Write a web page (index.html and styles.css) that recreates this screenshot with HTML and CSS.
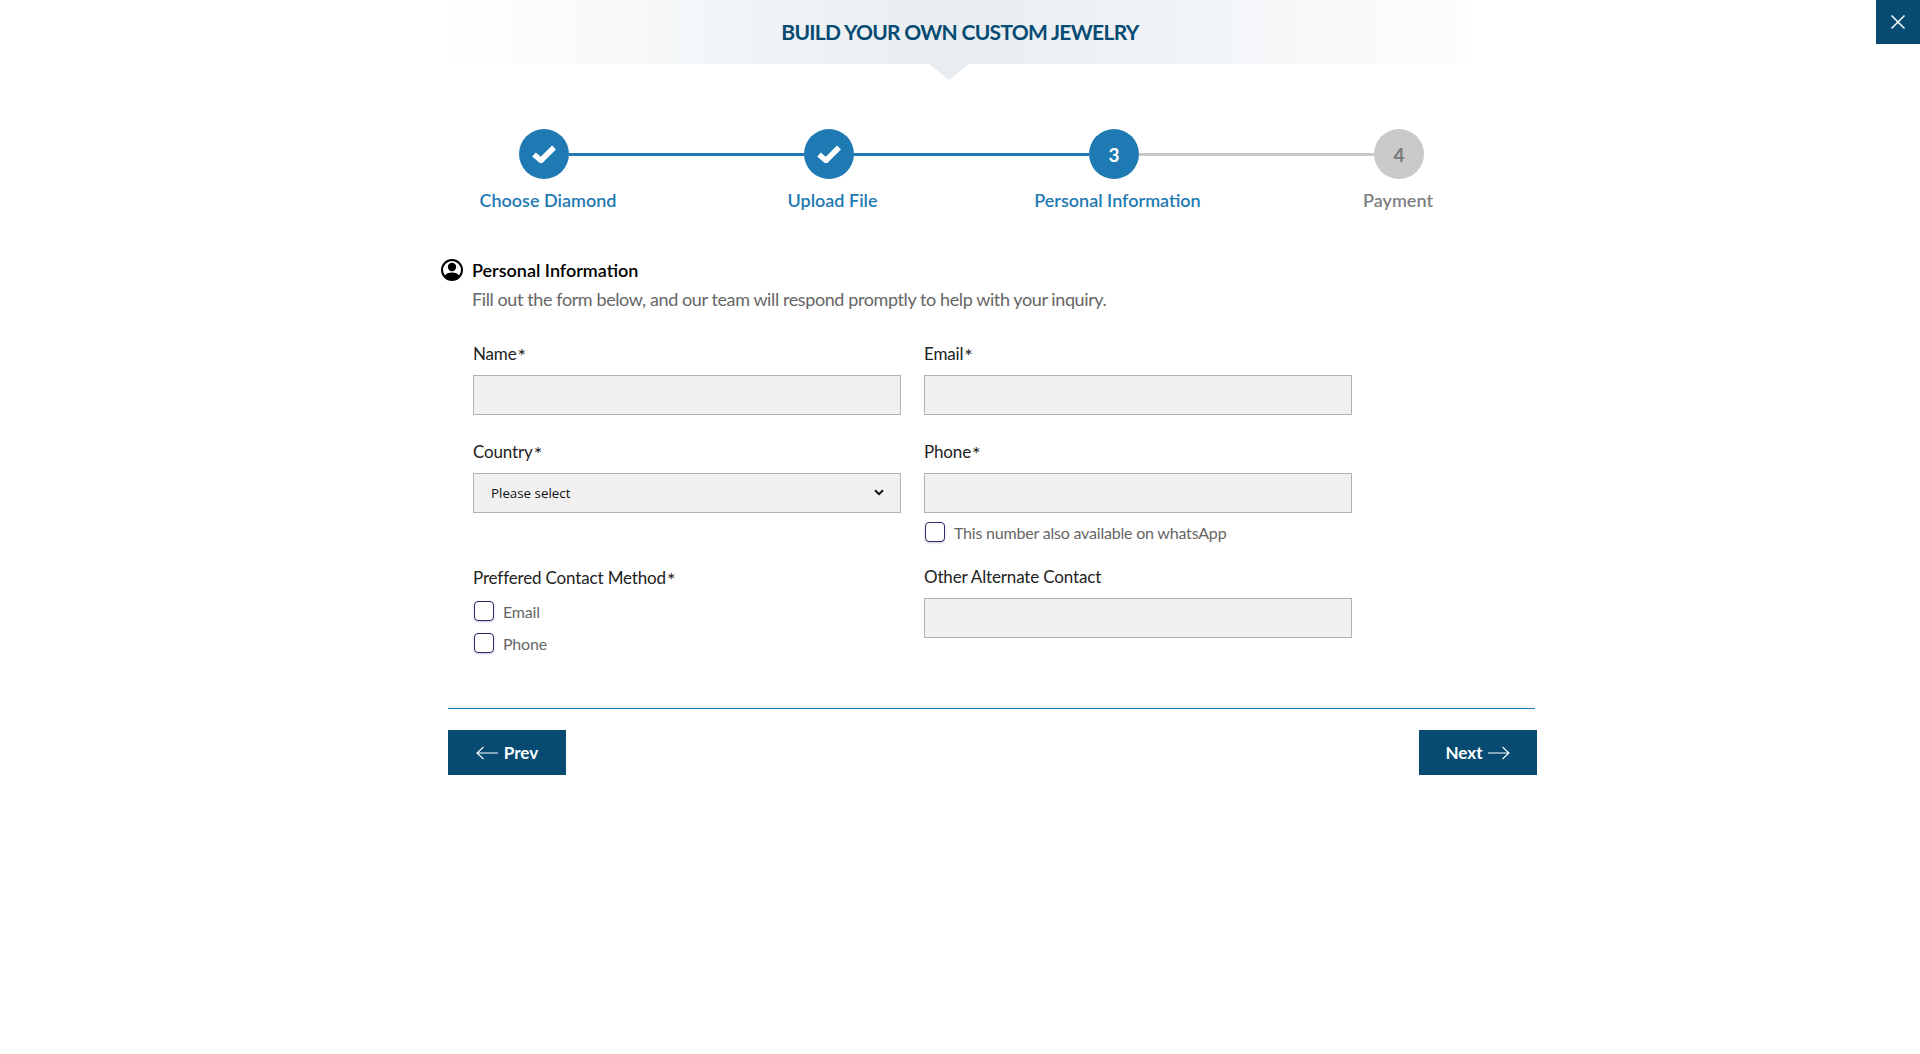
FILE: index.html
```html
<!DOCTYPE html>
<html lang="en">
<head>
    <meta charset="UTF-8">
    <meta name="viewport" content="width=device-width, initial-scale=1.0">
    <title>Build Your Own Custom Jewelry</title>
    <link rel="stylesheet" href="styles.css">
</head>
<body>
    <div class="title-band">
        <h1 class="title">BUILD YOUR OWN CUSTOM JEWELRY</h1>
    </div>
    <button class="close-btn" type="button" aria-label="Close">
        <svg width="16" height="16" viewBox="0 0 16 16"><path d="M1.5 1.5l13 13M14.5 1.5l-13 13" stroke="#fff" stroke-width="1.5" fill="none"/></svg>
    </button>

    <div class="steps">
        <div class="step-track">
            <div class="step-dot">
                <svg width="24" height="18" viewBox="0 0 24 18"><path d="M2 9.5L9 15.5 22 2.5" stroke="#fff" stroke-width="5.5" fill="none"/></svg>
            </div>
            <div class="step-line"></div>
            <div class="step-dot">
                <svg width="24" height="18" viewBox="0 0 24 18"><path d="M2 9.5L9 15.5 22 2.5" stroke="#fff" stroke-width="5.5" fill="none"/></svg>
            </div>
            <div class="step-line"></div>
            <div class="step-dot">3</div>
            <div class="step-line todo"></div>
            <div class="step-dot todo">4</div>
        </div>
        <div class="step-names">
            <span>Choose Diamond</span>
            <span>Upload File</span>
            <span>Personal Information</span>
            <span class="todo">Payment</span>
        </div>
    </div>

    <div class="panel">
        <h2 class="section-title">
            <svg width="22" height="22" viewBox="0 0 22 22">
                <circle cx="11" cy="11" r="10" fill="none" stroke="#000" stroke-width="2"/>
                <circle cx="11" cy="8" r="4.2"/>
                <path d="M3.6 17C5 14.4 8 13.4 11 13.4s6 1 7.4 3.6A10 10 0 0 1 3.6 17z"/>
            </svg>
            Personal Information
        </h2>
        <p class="section-text">Fill out the form below, and our team will respond promptly to help with your inquiry.</p>

        <form class="form-grid">
            <div class="form-col">
                <div class="field">
                    <label>Name<span class="req">*</span></label>
                    <input type="text">
                </div>
                <div class="field">
                    <label>Country<span class="req">*</span></label>
                    <div class="select-wrap">
                        <select>
                            <option>Please select</option>
                        </select>
                        <svg class="select-arrow" width="10" height="7" viewBox="0 0 10 7"><path d="M1 1.2l4 4 4-4" stroke="#111" stroke-width="2" fill="none"/></svg>
                    </div>
                </div>
                <div class="contact-method">
                    <label>Preffered Contact Method<span class="req">*</span></label>
                    <div class="check"><span class="box"></span>Email</div>
                    <div class="check"><span class="box"></span>Phone</div>
                </div>
            </div>
            <div class="form-col">
                <div class="field">
                    <label>Email<span class="req">*</span></label>
                    <input type="text">
                </div>
                <div class="field">
                    <label>Phone<span class="req">*</span></label>
                    <input type="text">
                </div>
                <div class="check whatsapp"><span class="box"></span>This number also available on whatsApp</div>
                <div class="field other">
                    <label>Other Alternate Contact</label>
                    <input type="text">
                </div>
            </div>
        </form>

        <div class="divider"></div>

        <div class="actions">
            <button class="nav-btn prev" type="button">
                <svg width="22" height="14" viewBox="0 0 22 14"><path d="M22 7H1M7.5 1L1 7l6.5 6" stroke="#fff" stroke-width="1.1" fill="none"/></svg>
                Prev
            </button>
            <button class="nav-btn next" type="button">
                Next
                <svg width="22" height="14" viewBox="0 0 22 14"><path d="M0 7h21M14.5 1L21 7l-6.5 6" stroke="#fff" stroke-width="1.1" fill="none"/></svg>
            </button>
        </div>
    </div>
</body>
</html>
```

FILE: styles.css
```css
:root {
    --navy: #074b73;
    --blue: #1f7ab3;
}
body {
    margin: 0;
    background: #fff;
    color: #111;
    font-family: Lato, "Open Sans", sans-serif;
}
.title-band {
    position: relative;
    display: flex;
    justify-content: center;
    align-items: center;
    box-sizing: border-box;
    height: 64px;
    margin: 0 450px 0 440px;
    padding-bottom: 2px;
    background: linear-gradient(90deg, #fff 0%, #e8edf1 50%, #fdfdfe 100%);
}
.title-band::after {
    content: "";
    position: absolute;
    left: 489px;
    top: 64px;
    border-left: 20px solid transparent;
    border-right: 20px solid transparent;
    border-top: 16px solid #e8edf1;
}
.title {
    position: relative;
    left: 5px;
    margin: 0;
    font-size: 21px;
    font-weight: 700;
    letter-spacing: -0.7px;
    color: var(--navy);
}
.close-btn {
    position: absolute;
    top: 0;
    right: 0;
    display: flex;
    justify-content: center;
    align-items: center;
    width: 44px;
    height: 44px;
    padding: 0;
    border: none;
    background: var(--navy);
}

/* steps */
.steps {
    margin-top: 65px;
}
.step-track {
    display: flex;
    align-items: center;
    width: 905px;
    margin-left: 519px;
}
.step-dot {
    display: flex;
    justify-content: center;
    align-items: center;
    flex: none;
    width: 50px;
    height: 50px;
    border-radius: 50%;
    background: var(--blue);
    color: #fff;
    font-size: 19px;
    font-weight: 700;
}
.step-dot.todo {
    background: #c9c9c9;
    color: #777;
}
.step-line {
    flex: 1;
    height: 3px;
    background: var(--blue);
}
.step-line.todo {
    background: #c9c9c9;
}
.step-names {
    display: grid;
    grid-template-columns: 284px 285px 285px 276px;
    width: 1130px;
    margin: 9px 0 0 406px;
    text-align: center;
    font-size: 18px;
    line-height: 24px;
    font-weight: 600;
    color: var(--blue);
}
.step-names .todo {
    color: #808080;
}

/* form */
.panel {
    width: 1089px;
    margin: 46px 0 0 448px;
}
.section-title {
    display: flex;
    align-items: center;
    gap: 9px;
    margin: 0 0 0 -7px;
    font-size: 18px;
    line-height: 24px;
    font-weight: 600;
    color: #000;
}
.section-text {
    margin: 5px 0 0 24px;
    font-size: 18px;
    line-height: 24px;
    letter-spacing: -0.4px;
    color: #666;
}
.form-grid {
    display: grid;
    grid-template-columns: 428px 428px;
    gap: 23px;
    margin: 31px 0 0 25px;
}
.form-col {
    display: flex;
    flex-direction: column;
}
.field {
    margin-bottom: 25px;
}
label {
    display: block;
    margin-bottom: 9px;
    font-size: 17px;
    line-height: 24px;
    letter-spacing: -0.15px;
    color: #222;
}
.req {
    margin-left: 1px;
    font-size: 20px;
    line-height: 0;
    vertical-align: -3px;
}
input[type="text"],
select {
    display: block;
    box-sizing: border-box;
    width: 100%;
    height: 40px;
    border: 1.5px solid #b3b3b3;
    border-radius: 0;
    background-color: #f0f0f0;
}
.select-wrap {
    position: relative;
}
select {
    appearance: none;
    padding-left: 17px;
    font-family: "Open Sans", sans-serif;
    font-size: 13.33px;
    color: #111;
}
.select-arrow {
    position: absolute;
    top: 16px;
    right: 17px;
}
.check {
    display: flex;
    align-items: center;
    gap: 9px;
    height: 20px;
    font-size: 16px;
    letter-spacing: -0.2px;
    color: #666;
}
.box {
    box-sizing: border-box;
    width: 20px;
    height: 20px;
    margin-left: 1px;
    border: 1.5px solid #2f2c66;
    border-radius: 4px;
    background: #fff;
    box-shadow: 0 1px 2px rgba(47, 44, 102, 0.25);
}
.whatsapp {
    margin-top: -16px;
}
.other {
    margin: 23px 0 0;
}
.contact-method {
    margin-top: 28px;
}
.contact-method label {
    margin-bottom: 11px;
}
.contact-method .check + .check {
    margin-top: 12px;
}
.divider {
    width: 1087px;
    margin-top: 55px;
    border-top: 1px solid var(--blue);
}
.actions {
    display: flex;
    justify-content: space-between;
    margin-top: 21px;
}
.nav-btn {
    display: flex;
    justify-content: center;
    align-items: center;
    gap: 6px;
    width: 118px;
    height: 45px;
    padding: 0;
    border: none;
    background: var(--navy);
    color: #fff;
    font-family: Lato, sans-serif;
    font-size: 17px;
    font-weight: 700;
}
```
